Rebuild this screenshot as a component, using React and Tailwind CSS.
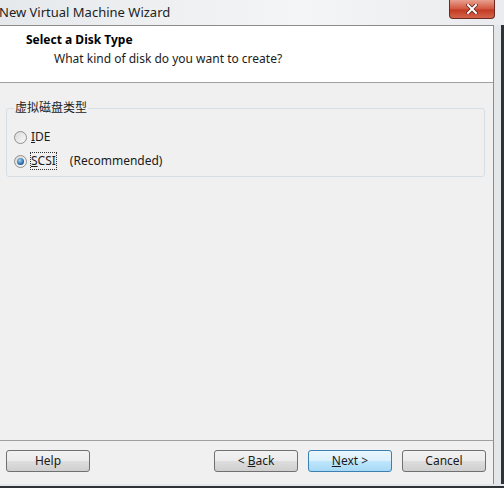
import React from "react";

const font = "font-['Noto_Sans','Noto_Sans_CJK_SC',sans-serif]";

const Radio = ({ checked }) => (
  <span className="relative flex h-[13px] w-[13px] items-center justify-center rounded-full border border-[#8f8f8f] bg-gradient-to-br from-[#d9d9d9] to-[#fafafa]">
    {checked && (
      <span className="h-[7px] w-[7px] rounded-full bg-[radial-gradient(circle_at_40%_35%,#9fd4f5,#1d5d9b_70%)]" />
    )}
  </span>
);

const Button = ({ children, primary, className = "" }) => (
  <button
    className={`h-[22px] w-[84px] rounded-[3px] border text-[12px] text-[#1b1b1b] ${
      primary
        ? "border-[#3c7fb1] bg-[linear-gradient(#eaf6fd_0%,#d9f0fc_50%,#bee6fd_51%,#a7d9f5_100%)]"
        : "border-[#707070] bg-[linear-gradient(#f2f2f2_0%,#ebebeb_50%,#dddddd_51%,#cfcfcf_100%)]"
    } ${className}`}
  >
    {children}
  </button>
);

export default function App() {
  return (
    <div className={`flex h-[488px] w-[504px] flex-col overflow-hidden bg-[#dfe3e8] ${font}`}>
      <div className="flex h-[25px] items-start justify-between bg-[linear-gradient(90deg,#e6e9ec,#f4f5f6_60%,#e9ebee)]">
        <span className="mt-[3px] -ml-[1px] text-[13px] leading-[18px] text-[#1e1e1e]">New Virtual Machine Wizard</span>
        <div className="mr-[9px] flex h-[19px] w-[46px] items-center justify-center rounded-b-[4px] border border-t-0 border-[#6e2a20] bg-[linear-gradient(#e8a08f,#d2553e_50%,#c23b22_55%,#d4644c)]">
          <svg width="12" height="10" viewBox="0 0 12 10">
            <path d="M2 1 L10 9 M10 1 L2 9" stroke="#5a2418" strokeWidth="3.4" strokeLinecap="square" />
            <path d="M2 1 L10 9 M10 1 L2 9" stroke="#ffffff" strokeWidth="2" strokeLinecap="square" />
          </svg>
        </div>
      </div>
      <div className="flex flex-1">
        <div className="flex flex-1 flex-col border-t border-r border-[#8c8c8c]">
          <div className="h-[57px] border-b border-[#a0a0a0] bg-white">
            <div className="ml-[26px] mt-[6px] text-[12px] font-bold leading-[16px] text-black">Select a Disk Type</div>
            <div className="ml-[54px] mt-[3px] text-[12px] leading-[16px] text-[#1b1b1b]">What kind of disk do you want to create?</div>
          </div>
          <div className="flex flex-1 flex-col bg-[#f0f0f0]">
            <fieldset className="ml-[6px] mr-[8px] mt-[18px] h-[76px] rounded-[3px] border border-[#d5dfe5] pl-[7px]">
              <legend className="px-[1px] text-[12px] leading-[14px] text-[#1b1b1b]">虚拟磁盘类型</legend>
              <div className="mt-[14px] flex items-center gap-[4px] text-[12px] leading-[16px] text-[#1b1b1b]">
                <Radio />
                <span><span className="underline">I</span>DE</span>
              </div>
              <div className="mt-[8px] flex items-center gap-[4px] text-[12px] leading-[16px] text-[#1b1b1b]">
                <Radio checked />
                <span className="outline-1 outline-dotted outline-[#333]"><span className="underline">S</span>CSI</span>
                <span className="ml-[10px]">(Recommended)</span>
              </div>
            </fieldset>
            <div className="flex-1" />
            <div className="border-t border-[#a0a0a0] pb-[12px] pt-[9px]">
              <div className="flex items-center pl-[6px] pr-[7px]">
                <Button>Help</Button>
                <div className="flex-1" />
                <Button>&lt; <span className="underline">B</span>ack</Button>
                <Button primary className="ml-[10px]"><span className="underline">N</span>ext &gt;</Button>
                <Button className="ml-[10px]">Cancel</Button>
              </div>
            </div>
          </div>
        </div>
        <div className="w-[10px] border-r-[3px] border-[#2f3337] bg-[#e4e7ea]" />
      </div>
      <div className="h-[4px] border-b-[2px] border-[#2f3337] bg-[#e4e7ea]" />
    </div>
  );
}
